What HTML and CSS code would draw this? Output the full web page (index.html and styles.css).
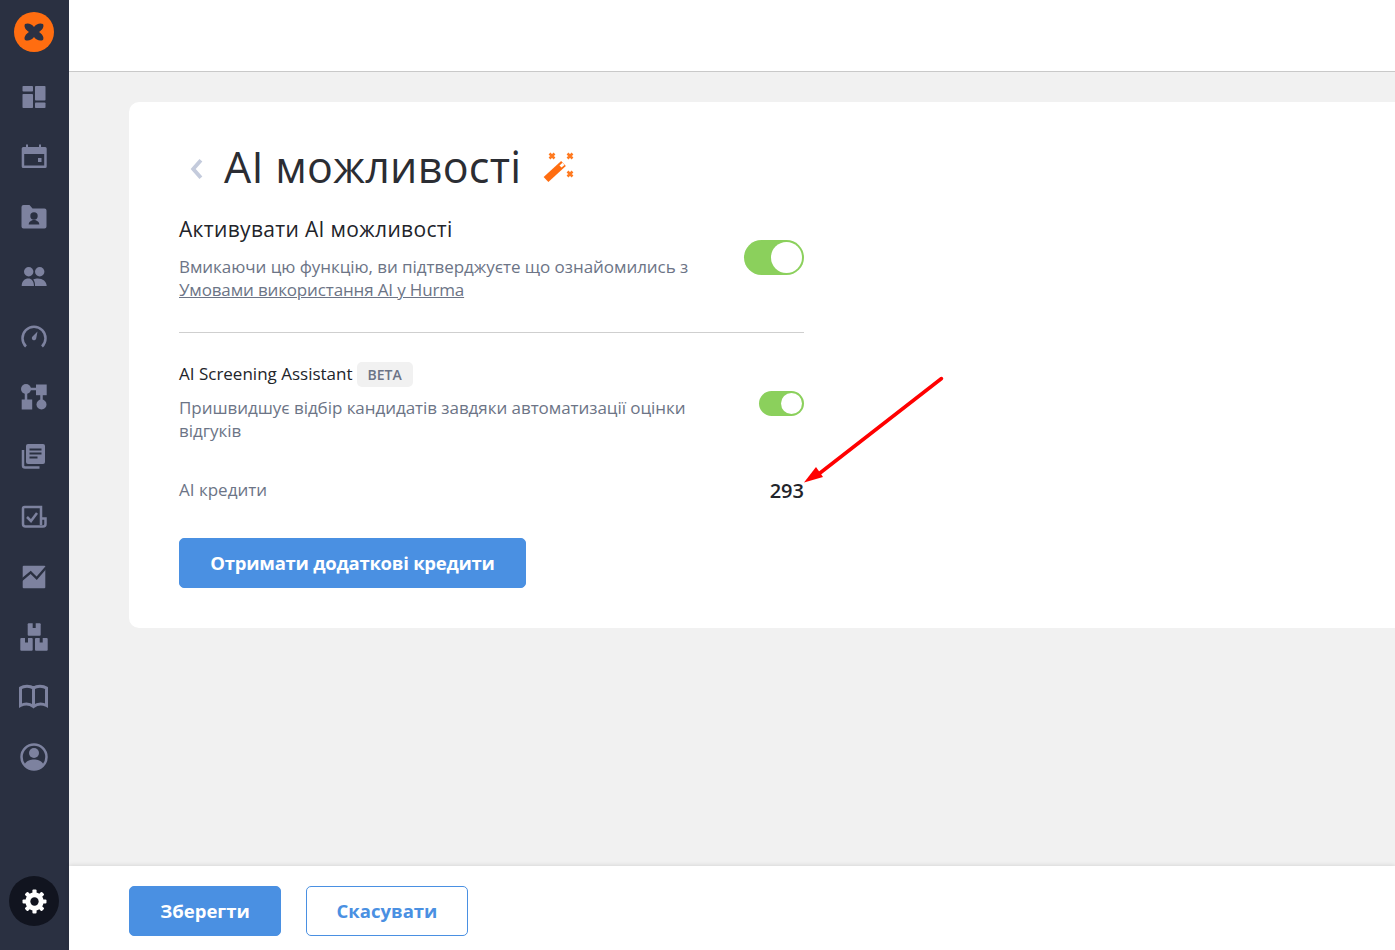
FILE: index.html
```html
<!DOCTYPE html>
<html lang="uk">
<head>
<meta charset="utf-8">
<title>AI можливості</title>
<link rel="stylesheet" href="styles.css">
</head>
<body>
<div class="app">
  <aside class="sidebar">
    <svg class="logo" viewBox="0 0 40 40"><circle cx="20" cy="20" r="20" fill="#ff6d10"/><path fill="#2b3143" d="M11 12C14 10.500 18 12 20 15 22 12 26 10.500 29 12 30.500 15 28 18 25 20 28 22 30.500 25 29 28 26 29.500 22 28 20 25 18 28 14 29.500 11 28 9.500 25 12 22 15 20 12 18 9.500 15 11 12z"/></svg>
    <nav class="nav">
      <a class="nav-item"><svg viewBox="0 0 36 36"><rect x="6.500" y="7" width="10.500" height="5.500" rx=".8"/><rect x="6.500" y="15" width="10.500" height="14" rx=".8"/><rect x="19" y="7" width="10.500" height="14.500" rx=".8"/><rect x="19" y="23.500" width="10.500" height="5.500" rx=".8"/></svg></a>
      <a class="nav-item"><svg viewBox="0 0 36 36"><path fill-rule="evenodd" d="M10 5.500h2V8h11V5.500h2V8h4.200a1.500 1.500 0 0 1 1.500 1.500v18a1.500 1.500 0 0 1-1.500 1.500H7.200a1.500 1.500 0 0 1-1.500-1.500v-18A1.500 1.500 0 0 1 7.200 8H10zM8.200 15v11.500h20V15z"/><rect x="22" y="19" width="3.500" height="4"/></svg></a>
      <a class="nav-item"><svg viewBox="0 0 36 36"><path d="M7.500 6h6l3 3.500h12a2 2 0 0 1 2 2v16a2 2 0 0 1-2 2h-21a2 2 0 0 1-2-2v-19.500a2 2 0 0 1 2-2z"/><circle class="cut" cx="18" cy="17" r="3.700"/><path class="cut" d="M12.700 25.500c0-3 3-4.500 5.300-4.500s5.300 1.500 5.300 4.500z"/></svg></a>
      <a class="nav-item"><svg viewBox="0 0 36 36"><circle cx="12.700" cy="12.700" r="4.700"/><circle cx="23.700" cy="12.700" r="4.700"/><path d="M5.700 27c0-5 3-7.500 6.700-7.500 3 0 5.600 2.500 5.600 7.500zM19 27c.2-3-.5-5-1.800-6.500 1.700-.8 3.300-1 4.500-1 5 0 9 3 9 7.500z"/></svg></a>
      <a class="nav-item"><svg viewBox="0 0 36 36"><path class="line" d="M10 27.500A11.500 11.500 0 1 1 26 27.500"/><path d="M21.500 12.500l-1.300 7a2.200 2.200 0 1 1-3.700-2z"/></svg></a>
      <a class="nav-item"><svg viewBox="0 0 36 36"><circle cx="10" cy="10" r="5"/><rect x="20" y="5.500" width="10.700" height="10.700"/><rect x="5.700" y="20.500" width="10.500" height="10"/><circle cx="25.500" cy="25.500" r="5"/><path class="line" d="M10 10h12M10 12v10M25.500 14v8"/></svg></a>
      <a class="nav-item"><svg viewBox="0 0 36 36"><rect x="10" y="5" width="19" height="20" rx="2"/><rect class="cut" x="13.500" y="9.500" width="12" height="2"/><rect class="cut" x="13.500" y="13.500" width="12" height="2"/><rect class="cut" x="13.500" y="17.500" width="8" height="2"/><path class="line" d="M7 11v15.500a2 2 0 0 0 2 2h14.500"/></svg></a>
      <a class="nav-item"><svg viewBox="0 0 36 36"><path class="line" d="M25 8H8.500A1.500 1.500 0 0 0 7 9.500V25a2.500 2.500 0 0 0 2.500 2.500H27a2.500 2.500 0 0 0 2.500-2.500v-5.500H25zM25 19.500V26"/><path class="line" d="M11 18l4 4 6-8"/></svg></a>
      <a class="nav-item"><svg viewBox="0 0 36 36"><rect x="6.700" y="6.700" width="22.600" height="22.600" rx="1"/><path class="cutline" d="M5 21.500l9.700-8.200 6 6L30 8.500"/></svg></a>
      <a class="nav-item"><svg viewBox="0 0 36 36"><rect x="11.700" y="4.300" width="13" height="12.400" rx="1"/><rect x="4.300" y="19" width="12.400" height="12.700" rx="1"/><rect x="19" y="19" width="12.700" height="12.700" rx="1"/><rect class="cut" x="16.700" y="4" width="3" height="5"/><rect class="cut" x="9" y="18.500" width="3" height="5"/><rect class="cut" x="23.700" y="18.500" width="3" height="5"/></svg></a>
      <a class="nav-item"><svg viewBox="0 0 36 36"><path class="line thick" d="M4.500 26.500V9c3.500-2.500 9.500-2.500 13 0 3.500-2.500 9.500-2.500 13 0v17.500c-4-2-9-2-13 1-4-3-9-3-13-1zM17.500 9v18"/></svg></a>
      <a class="nav-item"><svg viewBox="0 0 36 36"><circle class="line" cx="18" cy="18" r="12.500"/><circle cx="18" cy="14" r="5"/><path d="M8.500 25.500c2-4 6-5 9.500-5s7.500 1 9.500 5c-2.500 3-6 5-9.500 5s-7-2-9.500-5z"/></svg></a>
    </nav>
    <a class="settings"><svg viewBox="0 0 24 24"><g><rect x="10" y=".5" width="4" height="23" rx="1"/><rect x="10" y=".5" width="4" height="23" rx="1" transform="rotate(45 12 12)"/><rect x="10" y=".5" width="4" height="23" rx="1" transform="rotate(90 12 12)"/><rect x="10" y=".5" width="4" height="23" rx="1" transform="rotate(135 12 12)"/><circle cx="12" cy="12" r="8.800"/></g><circle class="gear-hole" cx="12" cy="12" r="4"/></svg></a>
  </aside>
  <div class="content">
    <header class="topbar"></header>
    <main class="main">
      <section class="card">
        <div class="title-row">
          <svg class="back" viewBox="0 0 12 20"><path d="M10 2L3 10l7 8"/></svg>
          <h1 class="title">AI можливості</h1>
          <svg class="wand" viewBox="0 0 34 34"><path class="wand-body" d="M3 29.500L20.500 13.500"/><path class="wand-tip" d="M17.500 16.500l3-2.700"/><path class="spark" d="M6.500 3.500l5 5M11.500 3.500l-5 5M24.500 3.500l5 5M29.500 3.500l-5 5M24.500 21.500l5 5M29.500 21.500l-5 5"/></svg>
        </div>
        <div class="setting setting-main">
          <div class="setting-text">
            <h2 class="heading">Активувати AI можливості</h2>
            <p class="desc">Вмикаючи цю функцію, ви підтверджуєте що ознайомились з <a class="link">Умовами використання AI у Hurma</a></p>
          </div>
          <span class="toggle toggle-lg"></span>
        </div>
        <hr class="divider">
        <div class="setting setting-sub">
          <div class="setting-text">
            <div class="sub-heading"><span>AI Screening Assistant</span><span class="badge">BETA</span></div>
            <p class="desc">Пришвидшує відбір кандидатів завдяки автоматизації оцінки відгуків</p>
          </div>
          <span class="toggle toggle-sm"></span>
        </div>
        <div class="credits"><span class="credits-label">AI кредити</span><span class="credits-value">293</span></div>
        <button class="btn btn-primary btn-credits">Отримати додаткові кредити</button>
      </section>
      <svg class="arrow" viewBox="0 0 150 115"><path d="M145.500 2.500L24 97" stroke="#f00" stroke-width="3.500" stroke-linecap="round" fill="none"/><path d="M8 106.500L20 91l7 10z" fill="#f00"/></svg>
    </main>
    <footer class="footer">
      <button class="btn btn-primary btn-save">Зберегти</button>
      <button class="btn btn-outline">Скасувати</button>
    </footer>
  </div>
</div>
</body>
</html>
```
FILE: styles.css
```css
* { box-sizing: border-box; }
html, body { margin: 0; height: 100%; overflow: hidden; }
body { font-family: "Open Sans", "Noto Sans", sans-serif; color: #2b2d33; background: #f1f1f1; }
.app { display: flex; height: 950px; }
.sidebar { width: 69px; flex: none; background: #2a3041; display: flex; flex-direction: column; align-items: center; padding: 12px 0 24px; }
.logo { width: 40px; height: 40px; margin-left: -1px; flex: none; }
.nav { margin-top: 15px; display: flex; flex-direction: column; flex: 1; }
.nav-item { width: 36px; height: 60px; display: flex; align-items: center; justify-content: center; margin-left: -1px; }
.nav-item svg { width: 36px; height: 36px; fill: #7d829f; }
.nav-item .line { fill: none; stroke: #7d829f; stroke-width: 2.500; }
.nav-item .thick { stroke-width: 3; }
.nav-item .cut { fill: #2a3041; }
.nav-item .cutline { fill: none; stroke: #2a3041; stroke-width: 2.400; }
.settings { width: 50px; height: 50px; border-radius: 50%; background: #11141f; display: flex; align-items: center; justify-content: center; margin-left: -1px; }
.settings svg { width: 25px; height: 25px; fill: #fff; }
.settings .gear-hole { fill: #11141f; }
.content { flex: 1; min-width: 0; display: flex; flex-direction: column; }
.topbar { height: 72px; background: #fff; border-bottom: 1px solid #c9c9c9; flex: none; }
.main { flex: 1; position: relative; padding: 30px 0 0 60px; }
.card { background: #fff; border-radius: 10px 0 0 10px; height: 526px; padding: 40px 50px; }
.title-row { display: flex; align-items: center; height: 50px; margin-left: 10px; }
.back { width: 15px; height: 22px; margin-top: 4px; fill: none; stroke: #c4cbdc; stroke-width: 3.500; flex: none; }
.title { font-size: 43px; line-height: 50px; font-weight: 400; letter-spacing: .3px; margin: 0 0 0 20px; color: #2b2d33; }
.wand { width: 34px; height: 34px; margin-left: 22px; flex: none; }
.wand-body { fill: none; stroke: #ff6d10; stroke-width: 7; stroke-linejoin: round; }
.wand-tip { fill: none; stroke: #fff; stroke-width: 3; }
.spark { fill: none; stroke: #ff7a20; stroke-width: 2.500; }
.setting { display: flex; justify-content: space-between; width: 625px; }
.setting-main { margin-top: 22px; align-items: flex-start; }
.setting-text { width: 520px; }
.heading { font-size: 21px; line-height: 30px; font-weight: 400; letter-spacing: .33px; margin: 0 0 11px; color: #22242a; }
.desc { font-size: 17px; line-height: 23px; margin: 0; color: #6c7486; letter-spacing: -.05px; }
.link { color: #6c7486; text-decoration: underline; display: block; letter-spacing: -.15px; }
.toggle { display: block; flex: none; background: #8bd05c; border-radius: 20px; position: relative; }
.toggle::after { content: ""; position: absolute; top: 2px; right: 2px; background: #fff; border-radius: 50%; }
.toggle-lg { width: 60px; height: 35px; margin-top: 26px; }
.toggle-lg::after { width: 31px; height: 31px; }
.toggle-sm { width: 45px; height: 25px; margin-top: 30px; }
.toggle-sm::after { width: 21px; height: 21px; }
.divider { width: 625px; margin: 31px 0 28px; border: 0; border-top: 1px solid #cfcfcf; }
.setting-sub { align-items: flex-start; }
.sub-heading { display: flex; align-items: center; font-size: 17px; line-height: 25px; color: #22242a; margin-bottom: 10px; height: 25px; }
.badge { margin: 2px 0 0 4px; padding: 0 11px; height: 25px; line-height: 25px; font-size: 14px; font-weight: 600; color: #6c7486; background: #f1f1f1; border-radius: 5px; }
.credits { width: 625px; display: flex; justify-content: space-between; align-items: center; margin-top: 34px; height: 28px; }
.credits-label { font-size: 17px; color: #6c7486; padding-bottom: 2px; }
.credits-value { font-size: 20px; font-weight: 600; color: #22242a; }
.btn { height: 50px; border-radius: 5px; font-family: inherit; font-size: 18.500px; font-weight: 700; border: 1px solid #4a90e2; padding: 0 0 2px; }
.btn-primary { background: #4a90e2; color: #fff; }
.btn-credits { width: 347px; margin-top: 34px; display: block; letter-spacing: -.25px; }
.btn-save { width: 152px; }
.btn-outline { width: 162px; background: #fff; color: #4a90e2; }
.arrow { position: absolute; left: 727px; top: 304px; width: 150px; height: 115px; }
.footer { height: 84px; flex: none; background: #fff; box-shadow: 0 -1px 4px rgba(0,0,0,.1); display: flex; align-items: center; gap: 25px; padding: 6px 0 0 60px; position: relative; }
```
